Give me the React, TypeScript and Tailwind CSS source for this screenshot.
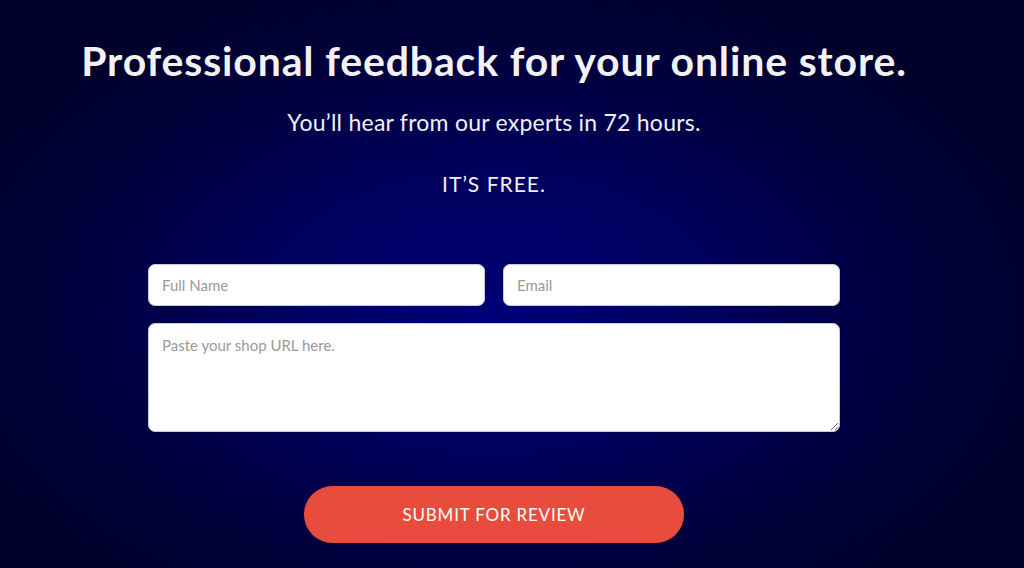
import React from "react";

export default function App() {
  return (
    <div
      className="w-[1024px] h-[568px] overflow-hidden bg-[radial-gradient(ellipse_55%_60%_at_48%_55%,#000078_0%,#00005a_45%,#000038_80%,#00002c_100%)]"
      style={{ fontFamily: "Lato, 'Open Sans', sans-serif" }}
    >
      <div className="w-[988px] flex flex-col items-center">
        <h1 className="mt-[35px] text-[41px] leading-[52px] font-bold text-[#f2f2f5] tracking-[0.85px]">
          Professional feedback for your online store.
        </h1>
        <p className="mt-[20px] text-[23px] leading-[30px] text-[#f0f0f5] tracking-[0.25px]">
          You’ll hear from our experts in 72 hours.
        </p>
        <p className="mt-[33px] text-[21px] leading-[28px] text-[#f0f0f5] tracking-[1px]">IT’S FREE.</p>

        <form className="mt-[66px] w-[692px] flex flex-col gap-[17px]">
          <div className="flex gap-[18px]">
            <input
              className="flex-1 h-[42px] rounded-[7px] bg-white border border-[#c9c9d4] px-[13px] text-[15px] text-[#555] placeholder:text-[#9a9a9a] outline-none"
              placeholder="Full Name"
            />
            <input
              className="flex-1 h-[42px] rounded-[7px] bg-white border border-[#c9c9d4] px-[13px] text-[15px] text-[#555] placeholder:text-[#9a9a9a] outline-none"
              placeholder="Email"
            />
          </div>
          <textarea
            className="h-[109px] rounded-[7px] bg-white border border-[#c9c9d4] px-[13px] py-[10px] text-[15px] text-[#555] placeholder:text-[#9a9a9a] outline-none"
            placeholder="Paste your shop URL here."
          />
          <div className="flex justify-center mt-[37px]">
            <button
              type="button"
              className="w-[380px] h-[57px] rounded-full bg-[#e74c3c] text-white text-[17px] tracking-[0.8px]"
            >
              SUBMIT FOR REVIEW
            </button>
          </div>
        </form>
      </div>
    </div>
  );
}
